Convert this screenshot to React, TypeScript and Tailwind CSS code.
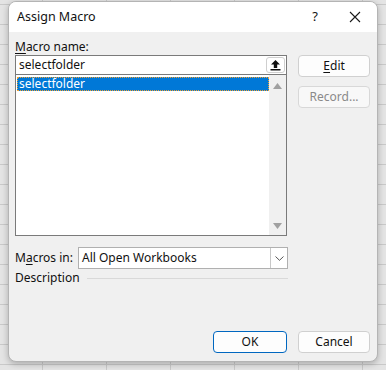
export default function App() {
  return (
    <div
      className="w-[386px] h-[370px] overflow-hidden bg-[#e4e4e4] bg-[linear-gradient(90deg,#c9c9c9_1px,transparent_1px),linear-gradient(0deg,#c9c9c9_1px,transparent_1px)] bg-[size:64px_20px] bg-[position:42px_5px] pt-[1px] pl-[8px]"
      style={{ fontFamily: '"Noto Sans", "Open Sans", sans-serif' }}
    >
      {/* Dialog */}
      <div className="w-[370px] h-[361px] rounded-[8px] border border-[#b4b4b4] bg-[#f0f0f0] overflow-hidden shadow-[0_2px_6px_rgba(0,0,0,0.25)] flex flex-col text-[12px] text-[#111]">
        {/* Title bar */}
        <div className="h-[30px] bg-white flex items-center pl-[8px] pr-[13px]">
          <span className="text-[12.5px] flex-1">Assign Macro</span>
          <span className="text-[13px] w-[24px] text-center mr-[22px]">?</span>
          <svg width="12" height="12" viewBox="0 0 12 12" className="mr-[3px]">
            <path d="M1 1 L11 11 M11 1 L1 11" stroke="#1a1a1a" strokeWidth="1.1" />
          </svg>
        </div>

        {/* Body */}
        <div className="flex-1 flex flex-col pl-[6px] pr-[7px] pt-[6px]">
          <div className="flex gap-[11px]">
            {/* Left column */}
            <div className="w-[273px] flex flex-col">
              <div className="h-[17px] leading-[17px]">
                <span className="underline underline-offset-2">M</span>acro name:
              </div>
              <div className="h-[20px] border border-[#7a7a7a] bg-white flex items-center pl-[3px] pr-[1px]">
                <span className="flex-1">selectfolder</span>
                <div className="w-[19px] h-[16px] border border-[#cfcfcf] rounded-[3px] bg-white flex items-center justify-center">
                  <svg width="11" height="12" viewBox="0 0 11 12">
                    <path d="M5.5 1 L1 5.5 H3.8 V9 H7.2 V5.5 H10 Z" fill="#111" />
                    <rect x="0.5" y="10" width="10" height="1.5" fill="#111" />
                  </svg>
                </div>
              </div>
              <div className="h-[161px] border border-t-0 border-[#7a7a7a] bg-white flex">
                <div className="flex-1 pt-[2px] pl-[1px]">
                  <div className="h-[14px] bg-[#0078d7] text-white leading-[13px] pl-[2px] outline outline-1 outline-dotted outline-[#f0a030] -outline-offset-1">
                    selectfolder
                  </div>
                </div>
                <div className="w-[17px] bg-[#f0f0f0] flex flex-col items-center justify-between pt-[8px] pb-[6px]">
                  <svg width="9" height="6" viewBox="0 0 9 6">
                    <path d="M0 6 L4.5 0 L9 6 Z" fill="#a0a0a0" />
                  </svg>
                  <svg width="9" height="6" viewBox="0 0 9 6">
                    <path d="M0 0 L9 0 L4.5 6 Z" fill="#a0a0a0" />
                  </svg>
                </div>
              </div>
            </div>

            {/* Right column */}
            <div className="w-[72px] flex flex-col gap-[9px] pt-[17px]">
              <button className="h-[22px] rounded-[4px] border border-[#d0d0d0] bg-[#fdfdfd] text-[12px] text-[#111]">
                <span className="underline underline-offset-2">E</span>dit
              </button>
              <button className="h-[22px] rounded-[4px] border border-[#d8d8d8] bg-[#f8f8f8] text-[12px] text-[#8a8a8a]">
                Record...
              </button>
            </div>
          </div>

          {/* Macros in */}
          <div className="flex items-center w-[273px] mt-[11px]">
            <span className="w-[63px]">
              M<span className="underline underline-offset-2">a</span>cros in:
            </span>
            <div className="flex-1 h-[22px] border border-[#b0b0b0] bg-white flex items-center pl-[3px]">
              <span className="flex-1">All Open Workbooks</span>
              <div className="w-[17px] h-[20px] border-l border-[#c8c8c8] flex items-center justify-center">
                <svg width="9" height="5" viewBox="0 0 9 5">
                  <path d="M0.5 0.5 L4.5 4.3 L8.5 0.5" stroke="#444" strokeWidth="0.9" fill="none" />
                </svg>
              </div>
            </div>
          </div>

          {/* Description */}
          <div className="flex items-center w-[273px] h-[18px]">
            <span>Description</span>
            <div className="flex-1 ml-[7px] h-px bg-[#d9d9d9]" />
          </div>

          {/* Footer buttons */}
          <div className="mt-auto mb-[8px] flex justify-end gap-[11px]">
            <button className="w-[74px] h-[22px] rounded-[4px] border border-[#0067c0] bg-[#fdfdfd] text-[12px] text-[#111]">
              OK
            </button>
            <button className="w-[72px] h-[22px] rounded-[4px] border border-[#d0d0d0] bg-[#fdfdfd] text-[12px] text-[#111]">
              Cancel
            </button>
          </div>
        </div>
      </div>
    </div>
  )
}
